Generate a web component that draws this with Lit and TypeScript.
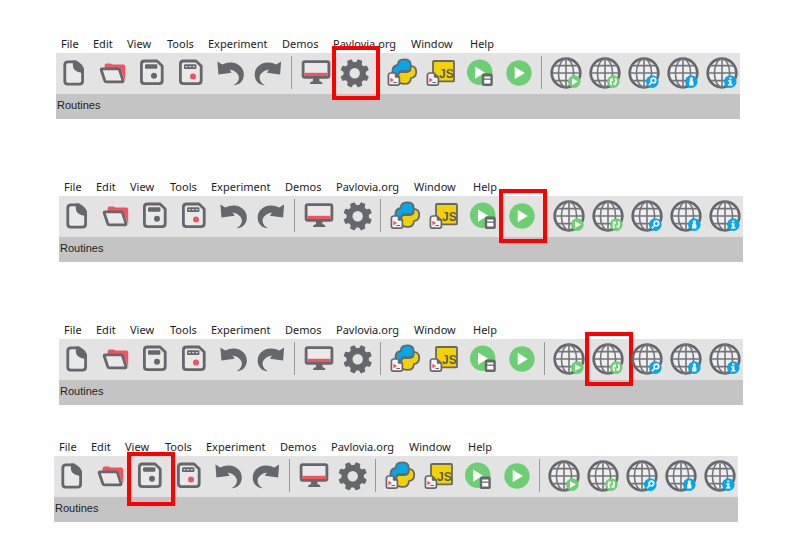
import { LitElement, html, svg, css } from "lit";
import { customElement, property } from "lit/decorators.js";
import { classMap } from "lit/directives/class-map.js";

const MENU = ["File", "Edit", "View", "Tools", "Experiment", "Demos", "Pavlovia.org", "Window", "Help"];

const TOOLS: [string, string][][] = [
  [["new", "New"], ["open", "Open"], ["save", "Save"], ["saveas", "Save as"], ["undo", "Undo"], ["redo", "Redo"]],
  [["monitor", "Monitor center"], ["gear", "Experiment settings"]],
  [["python", "Compile to Python"], ["js", "Compile to JS"], ["pilot", "Send to runner"], ["play", "Run"]],
  [["webrun", "Run online"], ["websync", "Sync project"], ["websearch", "Search projects"], ["webuser", "Log in"], ["webinfo", "Project info"]],
];

const arrow = svg`<path class="ink" d="M2.4 4.6 L7.2 7.6 Q11.5 5.4 16 5.6 C23.5 6 28.8 11 28.8 17.4 C28.8 23.4 25 28 18.6 28.2 C22.4 26.2 24.4 23 23.8 19.6 C23.2 16.2 19.6 13.4 14.6 12.4 L16.6 15.8 L3.4 17.6Z"/>`;

const disk = svg`<path class="line" d="M7.5 4 H20 L25.2 9 V23.5 Q25.2 26.7 22 26.7 H7.5 Q4.4 26.7 4.4 23.5 V7 Q4.4 4 7.5 4Z"/>`;

const sheet = svg`
  <path class="page" d="M4 16 H8 L12.4 20.4 V26.3 Q12.4 28.2 10.6 28.2 H3.2 Q1.4 28.2 1.4 26.3 V18.2 Q1.6 16 4 16Z"/>
  <path class="ink" d="M7.8 15.6 L12.8 20.8 H9 Q7.8 20.8 7.8 19.6Z"/>
  <path class="red" d="M3.4 20.8 L7 23 L3.4 25.2Z"/>
  <path class="ink" d="M6.4 25 h3.6 v1 h-3.6z"/>`;

const globe = svg`
  <circle class="globe" cx="15" cy="16" r="14.3"/>
  <path class="grid" d="M15 2 V30 M1 16 H29 M3.5 8.6 H26.5 M3.5 23.6 H26.5"/>
  <ellipse class="grid" cx="15" cy="16" rx="7.6" ry="14"/>`;

const snakeHalf = "M10.8 8 Q10.8 2.3 17 2.3 Q23.6 2.3 23.6 7 V11.2 Q23.6 14.2 20.4 14.2 H14.6 Q11.4 14.2 11.4 17.4 V20.4 Q5.4 20.4 5.4 14.4 Q5.4 8.8 10.8 8Z";

const ICONS: Record<string, unknown> = {
  new: svg`
    <path class="line" d="M8.5 4.8 H16.5 L23.6 12 V24 Q23.6 27.2 20.4 27.2 H8.8 Q5.8 27.2 5.8 24 V8 Q5.8 4.8 8.8 4.8Z"/>
    <path class="ink" d="M13.8 3.4 H17 Q24.6 7 25 13 V15.8 H22 Q13.8 14.6 13.8 8Z"/>`,
  open: svg`
    <path class="red" d="M6.6 12 V8.6 Q6.6 6.4 8.6 6.4 H12.4 L14.6 7.6 H25.4 Q27.2 7.6 27.2 9.6 V24 L22.4 12Z"/>
    <path class="line" d="M4 11.8 H20 Q21.2 11.8 21.6 13 L25 23.6 Q25.2 24.9 24.2 24.9 H8.4 Q7.2 24.9 6.8 23.8 L3.2 13 Q3 11.8 4 11.8Z"/>`,
  save: svg`${disk}<rect class="ink" x="8" y="7.3" width="12.4" height="4.4" rx="1.2"/><circle class="ink" cx="17" cy="18.8" r="3"/>`,
  saveas: svg`${disk}<rect class="ink" x="8" y="7.3" width="12.4" height="4.8" rx="1.2"/>
    <path class="dots" d="M9.6 9.7 h2 M13.2 9.7 h2 M16.8 9.7 h2"/><circle class="red" cx="17" cy="19.4" r="3"/>`,
  undo: arrow,
  redo: svg`<g transform="matrix(-1 0 0 1 29.5 0)">${arrow}</g>`,
  monitor: svg`
    <rect class="line" x="2.1" y="4.7" width="25.8" height="15.6" rx="1.6"/>
    <rect class="red" x="3.4" y="15.8" width="23.2" height="3.2"/>
    <path class="ink" d="M12 21 H18.4 V24 Q21.4 24.6 21.6 27 H8.8 Q9 24.6 12 24Z"/>`,
  gear: svg`
    <circle class="ring" cx="14.7" cy="16.3" r="8.2"/>
    ${[0, 1, 2, 3, 4, 5, 6, 7].map(
      (i) => svg`<path class="ink" transform="rotate(${22.5 + i * 45} 14.7 16.3)" d="M11.3 7.6 L12.2 2.6 Q12.3 2 13 2 H16.4 Q17.1 2 17.2 2.6 L18.1 7.6Z"/>`
    )}`,
  python: svg`
    <path class="snake yellow" transform="rotate(180 17.3 14.6)" d=${snakeHalf}/>
    <path class="snake blue" d=${snakeHalf}/>
    ${sheet}`,
  js: svg`
    <rect class="snake yellow" x="7" y="4" width="21" height="20.4" rx="1"/>
    <text class="js" x="13" y="21">JS</text>
    ${sheet}`,
  pilot: svg`
    <circle class="green" cx="14.7" cy="15.3" r="12.7"/>
    <path class="white" d="M10 9.4 L20 15.5 L10 21.8Z"/>
    <rect class="ink" x="16.8" y="16.5" width="11" height="12.6" rx="2.2"/>
    <path class="white" d="M19.2 19.4 h6.2 v2 h-6.2z M19.2 22.8 h6.2 v3.8 h-6.2z"/>`,
  play: svg`
    <circle class="green" cx="15" cy="16" r="12.7"/>
    <path class="white" d="M10.7 9.7 L20.8 16 L10.7 22.3Z"/>`,
  webrun: svg`${globe}<circle class="green" cx="23.3" cy="24.6" r="6.3"/><path class="white" d="M21 21.2 L27 24.6 L21 28Z"/>`,
  websync: svg`${globe}<circle class="green" cx="23.3" cy="24.6" r="6.3"/>
    <path class="mark" d="M21.4 28 Q19.4 25 21.4 22.2 M25.2 21.2 Q27.2 24.2 25.2 27"/>
    <path class="white" d="M20 21.4 H23 V24.4Z M26.6 27.8 H23.6 V24.8Z"/>`,
  websearch: svg`${globe}<circle class="blue" cx="23.3" cy="24.6" r="6.3"/>
    <circle class="mark" cx="24.4" cy="23.4" r="2.3"/><path class="mark" d="M22.7 25.3 L19.9 28.2"/>`,
  webuser: svg`${globe}<circle class="blue" cx="23.3" cy="24.6" r="6.3"/>
    <circle class="white" cx="23.3" cy="21.8" r="1.6"/><path class="white" d="M22.2 23 H24.4 L25.4 25 V28.6 H21.2 V25Z"/>`,
  webinfo: svg`${globe}<circle class="blue" cx="23.3" cy="24.6" r="6.3"/>
    <path class="white" d="M22.2 20.4 h2.2 v1.8 h-2.2z M21.2 23.2 h3.2 v4 h1.2 v1.4 h-4.6 v-1.4 h1.2 v-2.6 h-1z"/>`,
};

@customElement("tool-window")
export class ToolWindow extends LitElement {
  @property() marked = "";
  @property({ type: Boolean }) low = false;

  static styles = css`
    :host {
      display: block;
    }
    button {
      appearance: none;
      border: 0;
      margin: 0;
      padding: 0;
      background: none;
    }
    .menu {
      display: grid;
      grid-template-columns: 32px 34px 40px 41px 74px 51px 78px 59px auto;
      height: 20px;
      padding: 1px 0 0 5px;
      box-sizing: border-box;
      justify-content: start;
    }
    .menu button {
      font: 11px/20px "Noto Sans", "Open Sans", sans-serif;
      color: #1c1c24;
      text-align: left;
      white-space: nowrap;
    }
    .tools {
      display: flex;
      padding: 3px 2px 5px 3px;
      background: #e3e3e3;
    }
    .group {
      display: flex;
      gap: 8px;
      padding-top: 1px;
    }
    .rule {
      width: 1px;
      height: 33px;
      margin: 0 9px 0 6px;
      background: #999999;
    }
    .tool {
      position: relative;
      width: 31px;
      height: 31px;
    }
    .marked::after {
      content: "";
      position: absolute;
      top: -11px;
      left: -8px;
      width: 48px;
      height: 54px;
      box-sizing: border-box;
      border: 4px solid #fe0000;
    }
    .low.marked::after {
      top: -8px;
    }
    .caption {
      margin: 0;
      height: 25px;
      padding-left: 1px;
      background: #c4c4c4;
      color: #222222;
      font: 11px/22px "Liberation Sans", Arial, sans-serif;
    }
    svg {
      display: block;
      width: 31px;
      height: 31px;
      overflow: visible;
    }
    .ink { fill: #66676d; }
    .red { fill: #f4525c; }
    .green { fill: #6ccf73; }
    .blue { fill: #04a8ea; }
    .yellow { fill: #f4d200; }
    .white { fill: #ffffff; }
    .line {
      fill: #e9e9e9;
      stroke: #66676d;
      stroke-width: 2.8;
      stroke-linejoin: round;
    }
    .ring {
      fill: none;
      stroke: #66676d;
      stroke-width: 6;
    }
    .globe {
      fill: #efeff0;
      stroke: #66676d;
      stroke-width: 2.7;
    }
    .grid {
      fill: none;
      stroke: #74757b;
      stroke-width: 1.6;
    }
    .snake {
      stroke: #66676d;
      stroke-width: 1.8;
      stroke-linejoin: round;
    }
    .page {
      fill: #f4f4f4;
      stroke: #66676d;
      stroke-width: 1.7;
    }
    .dots {
      stroke: #d8d8da;
      stroke-width: 1.2;
    }
    .mark {
      fill: none;
      stroke: #ffffff;
      stroke-width: 1.6;
    }
    .js {
      font: bold 12px "Liberation Sans", Arial, sans-serif;
      fill: #5c5b50;
    }
  `;

  render() {
    return html`
      <nav class="menu" aria-label="Menu">${MENU.map((m) => html`<button type="button">${m}</button>`)}</nav>
      <div class="tools" role="toolbar">
        ${TOOLS.map(
          (group, i) => html`
            ${i ? html`<span class="rule"></span>` : ""}
            <div class="group">
              ${group.map(
                ([id, label]) => html`<button
                  type="button"
                  aria-label=${label}
                  class=${classMap({ tool: true, marked: id === this.marked, low: this.low })}
                ><svg viewBox="0 0 31 31" aria-hidden="true">${ICONS[id]}</svg></button>`
              )}
            </div>`
        )}
      </div>
      <h2 class="caption">Routines</h2>
    `;
  }
}

@customElement("app-root")
export class AppRoot extends LitElement {
  static styles = css`
    :host {
      display: block;
      min-height: 100vh;
      box-sizing: border-box;
      padding-top: 33px;
      background: #ffffff;
    }
    .first {
      margin: 0 54px 57px 56px;
    }
    .second {
      margin: 0 51px 57px 59px;
    }
    .third {
      margin: 0 51px 31px 59px;
    }
    .fourth {
      margin: 0 56px 0 54px;
    }
  `;

  render() {
    return html`
      <tool-window class="first" marked="gear"></tool-window>
      <tool-window class="second" marked="play"></tool-window>
      <tool-window class="third" marked="websync"></tool-window>
      <tool-window class="fourth" marked="save" low></tool-window>
    `;
  }
}
